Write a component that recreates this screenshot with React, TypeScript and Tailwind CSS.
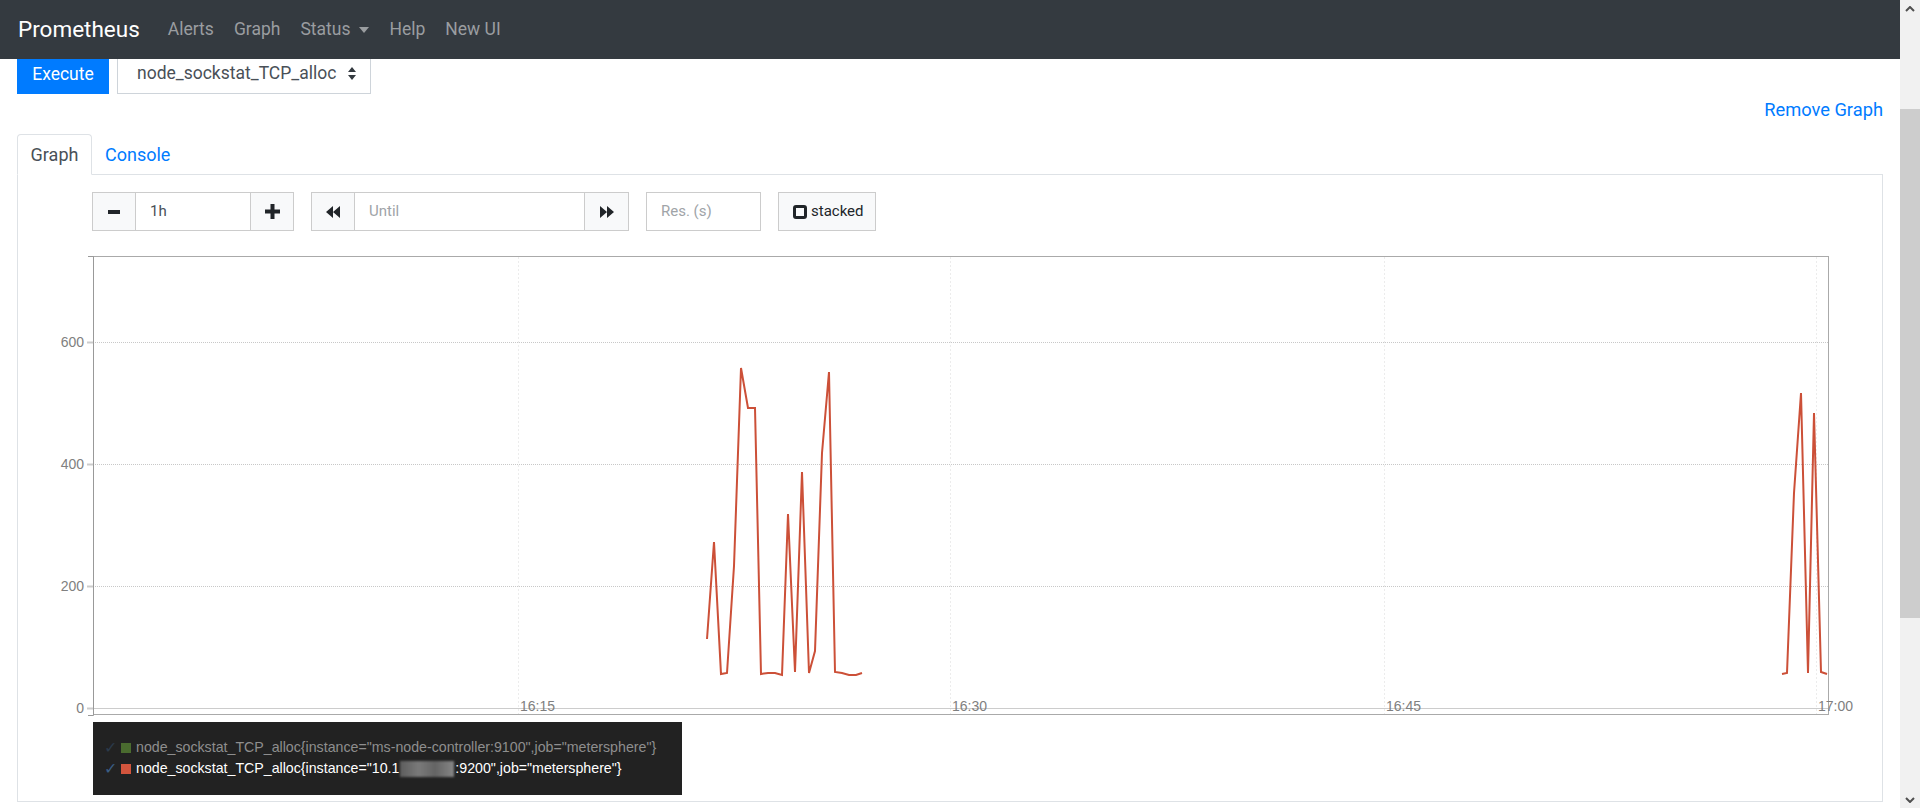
import React from "react";

const seriesA: [number, number][] = [
  [707, 639], [714, 542], [721, 674], [727, 673], [734, 566], [741, 368], [748, 408], [755, 408],
  [761, 674], [768, 673], [775, 673], [782, 675], [788, 514], [795, 672], [802, 472], [809, 673],
  [815, 651], [822, 453], [829, 372], [835, 672], [842, 673], [849, 675], [856, 675], [862, 673],
];

const seriesB: [number, number][] = [
  [1782, 674], [1787, 673], [1794, 493], [1801, 393], [1808, 673], [1814, 413], [1821, 672], [1827, 674],
];

const toPoints = (p: [number, number][]) => p.map(([x, y]) => `${x},${y}`).join(" ");

function Chart() {
  const yTicks = [
    { y: 342, label: "600" },
    { y: 464, label: "400" },
    { y: 586, label: "200" },
    { y: 708, label: "0" },
  ];
  const xTicks = [
    { x: 518, label: "16:15" },
    { x: 950, label: "16:30" },
    { x: 1384, label: "16:45" },
    { x: 1816, label: "17:00" },
  ];
  return (
    <svg width={1864} height={482} viewBox="18 240 1864 482" className="block">
      {yTicks.slice(0, 3).map((t) => (
        <line key={t.y} x1={93} x2={1829} y1={t.y + 0.5} y2={t.y + 0.5} stroke="#c8c8c8" strokeDasharray="1 1" />
      ))}
      {xTicks.map((t) => (
        <line key={t.x} x1={t.x + 0.5} x2={t.x + 0.5} y1={257} y2={715} stroke="#ececec" strokeDasharray="2 2" />
      ))}
      <line x1={93} x2={1829} y1={708.5} y2={708.5} stroke="#cccccc" />
      <rect x={93.5} y={256.5} width={1735} height={458} fill="none" stroke="#aaaaaa" />
      <path d="M88,256.5H93.5V715.5H88" fill="none" stroke="#999999" />
      {yTicks.map((t) => (
        <g key={t.label}>
          <line x1={87} x2={93} y1={t.y + 0.5} y2={t.y + 0.5} stroke="#cccccc" strokeWidth={2} />
          <text
            x={84}
            y={t.y + 5}
            textAnchor="end"
            fontSize={14}
            fill="#808080"
            fontFamily="'Liberation Sans', Arial, sans-serif"
          >
            {t.label}
          </text>
        </g>
      ))}
      {xTicks.map((t) => (
        <text
          key={t.label}
          x={t.x + 2}
          y={711}
          fontSize={14}
          fill="#7f7f7f"
          fontFamily="'Liberation Sans', Arial, sans-serif"
        >
          {t.label}
        </text>
      ))}
      <polyline points={toPoints(seriesA)} fill="none" stroke="#cc5038" strokeWidth={2} strokeLinejoin="miter" />
      <polyline points={toPoints(seriesB)} fill="none" stroke="#cc5038" strokeWidth={2} strokeLinejoin="miter" />
    </svg>
  );
}

function Legend() {
  return (
    <div className="ml-[75px] h-[73px] w-[589px] bg-[#222222] pt-[15px] text-[14.2px] leading-[21px] [font-family:'Liberation_Sans',Arial,sans-serif]">
      <div className="flex items-center text-[#8e8e8e]">
        <span className="w-[28px] pl-[11px] text-[16px] text-[#2b3a4a]">✓</span>
        <span className="mr-[5px] h-[10px] w-[10px] bg-[#4a6b2f]" />
        <span>node_sockstat_TCP_alloc{'{'}instance="ms-node-controller:9100",job="metersphere"{'}'}</span>
      </div>
      <div className="flex items-center text-white">
        <span className="w-[28px] pl-[11px] text-[16px] text-[#3a5d84]">✓</span>
        <span className="mr-[5px] h-[10px] w-[10px] bg-[#d2553d]" />
        <span>node_sockstat_TCP_alloc{'{'}instance="10.1</span>
        <span className="mx-[1px] inline-block h-[16px] w-[54px] bg-[linear-gradient(90deg,#5d5d5d,#7a7a7a_35%,#646464_65%,#868686)] blur-[1px]" />
        <span>:9200",job="metersphere"{'}'}</span>
      </div>
    </div>
  );
}

function IconBtn({ children, className = "" }: { children: React.ReactNode; className?: string }) {
  return (
    <div
      className={`flex h-[39px] items-center justify-center border border-[#cccccc] bg-[#f8f9fa] ${className}`}
    >
      {children}
    </div>
  );
}

function Controls() {
  return (
    <div className="ml-[74px] flex h-[39px] text-[15px]">
      <div className="flex">
        <IconBtn className="w-[44px]">
          <svg width="12" height="4" viewBox="0 0 12 4"><rect width="12" height="4" fill="#212529" /></svg>
        </IconBtn>
        <div className="-ml-px flex h-[39px] w-[116px] items-center border border-[#cccccc] bg-white pl-[14px] text-[#495057]">
          1h
        </div>
        <IconBtn className="-ml-px w-[44px]">
          <svg width="15" height="15" viewBox="0 0 15 15">
            <rect x="5.5" width="4" height="15" fill="#212529" />
            <rect y="5.5" width="15" height="4" fill="#212529" />
          </svg>
        </IconBtn>
      </div>
      <div className="ml-[17px] flex">
        <IconBtn className="w-[44px]">
          <svg width="14" height="12" viewBox="0 0 14 12">
            <path d="M7 0 L0 6 L7 12 Z M14 0 L7 6 L14 12 Z" fill="#212529" />
          </svg>
        </IconBtn>
        <div className="-ml-px flex h-[39px] w-[231px] items-center border border-[#cccccc] bg-white pl-[14px] text-[#a0a4a8]">
          Until
        </div>
        <IconBtn className="-ml-px w-[45px]">
          <svg width="14" height="12" viewBox="0 0 14 12">
            <path d="M0 0 L7 6 L0 12 Z M7 0 L14 6 L7 12 Z" fill="#212529" />
          </svg>
        </IconBtn>
      </div>
      <div className="ml-[17px] flex h-[39px] w-[115px] items-center border border-[#cccccc] bg-white pl-[14px] text-[#a0a4a8]">
        Res. (s)
      </div>
      <div className="ml-[17px] flex h-[39px] w-[98px] items-center border border-[#cccccc] bg-[#f8f9fa] pl-[14px] text-[#212529]">
        <span className="mr-[4px] h-[14px] w-[14px] rounded-[3px] border-[3px] border-[#212529]" />
        stacked
      </div>
    </div>
  );
}

function Scrollbar() {
  return (
    <div className="flex h-[808px] w-[20px] flex-col bg-[#f1f1f1]">
      <div className="flex h-[17px] items-center justify-center">
        <svg width="10" height="6" viewBox="0 0 10 6"><path d="M1 5 L5 1 L9 5" fill="none" stroke="#505050" strokeWidth="2" /></svg>
      </div>
      <div className="h-[92px]" />
      <div className="h-[509px] bg-[#cdcdcd]" />
      <div className="flex-1" />
      <div className="flex h-[17px] items-center justify-center">
        <svg width="10" height="6" viewBox="0 0 10 6"><path d="M1 1 L5 5 L9 1" fill="none" stroke="#505050" strokeWidth="2" /></svg>
      </div>
    </div>
  );
}

export default function App() {
  const links = ["Alerts", "Graph"];
  return (
    <div className="flex h-[808px] w-[1920px] overflow-hidden bg-white text-[#212529] [font-family:'Segoe_UI',Roboto,'Helvetica_Neue',Arial,sans-serif]">
      <div className="flex w-[1900px] flex-col">
        <nav className="flex h-[59px] shrink-0 items-center bg-[#343a40] pl-[18px]">
          <span className="mr-[18px] text-[22.5px] text-white">Prometheus</span>
          {links.map((l) => (
            <span key={l} className="px-[10px] text-[17.5px] text-[#9a9da0]">{l}</span>
          ))}
          <span className="flex items-center px-[10px] text-[17.5px] text-[#9a9da0]">
            Status
            <svg className="ml-[9px]" width="10" height="6" viewBox="0 0 10 6"><path d="M0 0 H10 L5 6 Z" fill="#9a9da0" /></svg>
          </span>
          <span className="px-[10px] text-[17.5px] text-[#9a9da0]">Help</span>
          <span className="px-[10px] text-[17.5px] text-[#9a9da0]">New UI</span>
        </nav>
        <div className="px-[17px]">
          <div className="flex h-[35px] gap-[8px]">
            <div className="flex w-[92px] items-center justify-center bg-[#007bff] pb-[5px] text-[17.5px] text-white">
              Execute
            </div>
            <div className="flex w-[254px] items-center border-x border-b border-[#ced4da] pb-[5px] pl-[19px] text-[17.5px] text-[#495057]">
              <span className="flex-1">node_sockstat_TCP_alloc</span>
              <svg className="mr-[14px]" width="8" height="13" viewBox="0 0 8 13">
                <path d="M0 5 L4 0 L8 5 Z M0 8 L4 13 L8 8 Z" fill="#343a40" />
              </svg>
            </div>
          </div>
          <div className="flex h-[32px] items-center justify-end text-[18.3px] text-[#007bff]">Remove Graph</div>
          <div className="mt-[8px] flex h-[41px] border-b border-[#dee2e6] text-[18px]">
            <div className="-mb-px flex h-[41px] w-[75px] items-center justify-center rounded-t-[4px] border border-[#dee2e6] border-b-white bg-white text-[#495057]">
              Graph
            </div>
            <div className="flex items-center pl-[13px] text-[#007bff]">Console</div>
          </div>
          <div className="h-[627px] border-x border-b border-[#dee2e6] pt-[17px]">
            <Controls />
            <div className="mt-[9px]">
              <Chart />
            </div>
            <Legend />
          </div>
        </div>
      </div>
      <Scrollbar />
    </div>
  );
}
